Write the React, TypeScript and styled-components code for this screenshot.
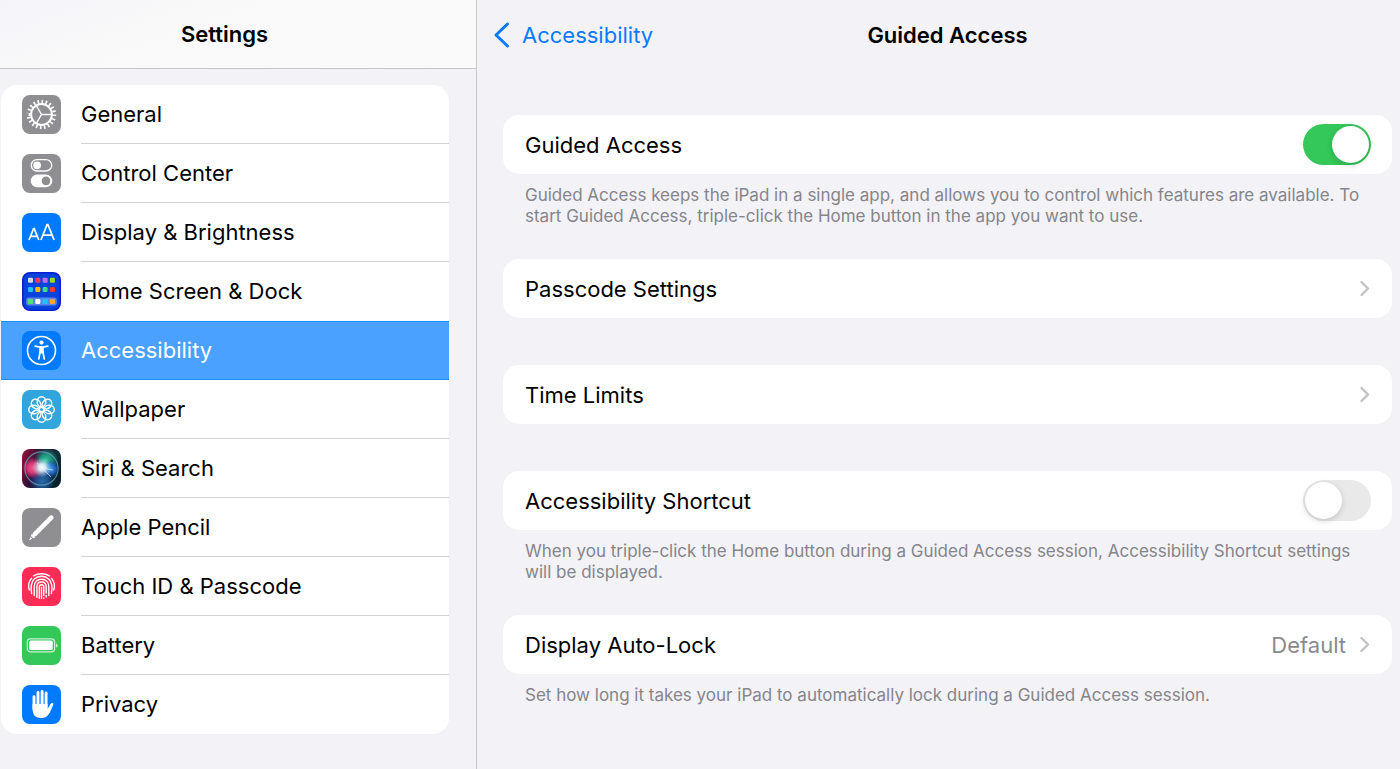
import React, { useState } from 'react';
import styled, { createGlobalStyle } from 'styled-components';

const GlobalStyle = createGlobalStyle`
  *, *::before, *::after { box-sizing: border-box; }
  body {
    margin: 0;
    background: #f2f2f7;
    color: #000;
    font-family: Inter, "Liberation Sans", sans-serif;
    font-size: 22px;
    line-height: 28px;
  }
  h1, h2, p, ul { margin: 0; padding: 0; }
  ul { list-style: none; }
`;

const Page = styled.div`
  display: grid;
  grid-template-columns: 34fr 66fr;
  min-height: 100vh;
`;

const Sidebar = styled.aside`
  min-width: 0;
`;

const SidebarHeader = styled.header`
  display: flex;
  align-items: center;
  justify-content: center;
  height: 69px;
  padding-right: 27px;
  border-bottom: 1px solid #c6c6c8;
  background: linear-gradient(160deg, #f4f4fa 0%, #f9f9f9 35%, #fafafa 100%);
`;

const Title = styled.h1`
  font-size: 22px;
  line-height: 28px;
  font-weight: 600;
`;

const Menu = styled.ul`
  margin: 16px 27px 36px 1px;
  border-radius: 16px;
  background: #fff;
  overflow: hidden;
`;

const MenuLabel = styled.span`
  flex: 1;
  display: flex;
  align-items: center;
  align-self: stretch;
  border-bottom: 1px solid #d2d2d4;
`;

const MenuLink = styled.a<{ $selected: boolean }>`
  display: flex;
  align-items: center;
  gap: 20px;
  height: 59px;
  padding-left: 21px;
  color: ${(p) => (p.$selected ? '#fff' : '#000')};
  background: ${(p) => (p.$selected ? '#4ba1ff' : 'transparent')};
  box-shadow: ${(p) => (p.$selected ? 'inset 0 1px #1b90fc, inset 0 -1px #1b90fc' : 'none')};
  text-decoration: none;

  ${MenuLabel} {
    border-color: ${(p) => (p.$selected ? 'transparent' : '#d2d2d4')};
  }
  li:last-child & ${MenuLabel},
  li:has(+ li [aria-current]) & ${MenuLabel} {
    border-color: transparent;
  }
`;

const Tile = styled.svg`
  flex: none;
  display: block;
  width: 39px;
  height: 39px;
  border-radius: 8px;
`;

const Detail = styled.main`
  min-width: 0;
  padding: 0 8px 48px 26px;
  border-left: 1px solid #c9c9cd;
`;

const DetailHeader = styled.header`
  display: grid;
  grid-template-columns: 1fr auto 1fr;
  align-items: center;
  height: 69px;
  margin-bottom: 46px;
`;

const BackLink = styled.a`
  display: flex;
  align-items: center;
  gap: 12px;
  margin-left: -9px;
  color: #0a7aff;
  text-decoration: none;
`;

const Sections = styled.div`
  display: flex;
  flex-direction: column;
`;

const Section = styled.section<{ $gap: number }>`
  margin-bottom: ${(p) => p.$gap}px;
`;

const Card = styled.div`
  border-radius: 16px;
  background: #fff;
`;

const ToggleRow = styled.label`
  display: flex;
  align-items: center;
  justify-content: space-between;
  height: 59px;
  padding: 0 21px 0 22px;
`;

const LinkRow = styled.button`
  display: flex;
  align-items: center;
  width: 100%;
  height: 59px;
  padding: 0 22px;
  border: 0;
  background: none;
  color: inherit;
  font: inherit;
  text-align: left;
`;

const RowValue = styled.span`
  margin-left: auto;
  margin-right: 14px;
  color: #8a8a8e;
`;

const RowText = styled.span`
  flex: 1;
`;

const Note = styled.p`
  padding: 11px 22px 0;
  color: #85858b;
  font-size: 17px;
  line-height: 21px;
`;

const Switch = styled.input`
  appearance: none;
  flex: none;
  display: flex;
  align-items: center;
  width: 68px;
  height: 41px;
  margin: 0;
  padding: 2px;
  border-radius: 21px;
  background: #e9e9ea;

  &::before {
    content: "";
    width: 37px;
    height: 37px;
    border-radius: 50%;
    background: #fff;
    box-shadow: 0 2px 6px rgba(0, 0, 0, 0.16);
  }
  &:checked {
    justify-content: flex-end;
    background: #34c759;
  }
`;

const GREY = '#8e8e93';
const BLUE = '#007aff';

const GearIcon = () => (
  <Tile viewBox="0 0 39 39" aria-hidden="true">
    <rect width="39" height="39" fill={GREY} />
    <g fill="none" stroke="#fff">
      <circle cx="19.5" cy="19.5" r="10.4" strokeWidth="2" />
      <circle cx="19.5" cy="19.5" r="12.9" strokeWidth="3.6" pathLength="40" strokeDasharray="0.8 1.2" />
      <path d="M19.5 19.5H30M19.5 19.5L14.2 10.4M19.5 19.5L14.2 28.6" strokeWidth="1.4" />
    </g>
  </Tile>
);

const ControlsIcon = () => (
  <Tile viewBox="0 0 39 39" aria-hidden="true">
    <rect width="39" height="39" fill={GREY} />
    <rect x="9.3" y="5.6" width="20.4" height="11.4" rx="5.7" fill="none" stroke="#fff" strokeWidth="1.3" />
    <circle cx="15.1" cy="11.3" r="3.9" fill="#fff" />
    <rect x="8.7" y="20.6" width="21.6" height="12.6" rx="6.3" fill="#fff" />
    <circle cx="24" cy="26.9" r="4.3" fill={GREY} />
  </Tile>
);

const DisplayIcon = () => (
  <Tile viewBox="0 0 39 39" aria-hidden="true">
    <rect width="39" height="39" fill={BLUE} />
    <path
      d="M7 27L11.6 15.6H12.2L16.8 27M8.6 23.4H15.2M18.9 27L25.1 11.6H25.9L32.1 27M21 22.2H30"
      fill="none"
      stroke="#fff"
      strokeWidth="1.7"
    />
  </Tile>
);

const appColours = [
  ['#d9d9dc', '#ff375f', '#bf6cf5', '#a6d82a'],
  ['#1fc0f5', '#ffb914', '#3ddc84', '#ff3b30'],
  ['#4ce37a', '#ffffff', '#1cc3f7', '#ffa630'],
];
const appRows = [5.7, 15, 27];

const HomeScreenIcon = () => (
  <Tile viewBox="0 0 39 39" aria-hidden="true">
    <rect width="39" height="39" fill="#0a1fd0" />
    <rect x="1.5" y="1.5" width="36" height="36" rx="7" fill="#0744dc" />
    <rect x="4.2" y="25.6" width="30.6" height="8" rx="2.4" fill="#5b86ea" />
    {appColours.map((row, r) =>
      row.map((fill, c) => (
        <rect key={fill} x={6 + c * 7.3} y={appRows[r]} width="5" height="5" rx="1.2" fill={fill} />
      )),
    )}
  </Tile>
);

const AccessibilityIcon = () => (
  <Tile viewBox="0 0 39 39" aria-hidden="true">
    <rect width="39" height="39" fill={BLUE} />
    <circle cx="19.5" cy="19.5" r="14" fill="none" stroke="#fff" strokeWidth="1.6" />
    <circle cx="19.5" cy="11.6" r="2.1" fill="#fff" />
    <path d="M17.2 15.2H21.8V22.4H17.2Z" fill="#fff" />
    <path
      d="M13.2 15.2L17.6 16.2H21.4L25.8 15.2M18.2 20.6L16.7 28M20.8 20.6L22.3 28"
      fill="none"
      stroke="#fff"
      strokeWidth="1.7"
      strokeLinecap="round"
      strokeLinejoin="round"
    />
  </Tile>
);

const WallpaperIcon = () => (
  <Tile viewBox="0 0 39 39" aria-hidden="true">
    <rect width="39" height="39" fill="#32a5dc" />
    <g fill="none" stroke="#fff" strokeWidth="1.5">
      {[0, 45, 90, 135, 180, 225, 270, 315].map((angle) => (
        <ellipse key={angle} cx="19.5" cy="11.8" rx="4.3" ry="5.1" transform={`rotate(${angle} 19.5 19.5)`} />
      ))}
      <circle cx="19.5" cy="19.5" r="2.3" />
    </g>
  </Tile>
);

const SiriIcon = () => (
  <Tile viewBox="0 0 39 39" aria-hidden="true">
    <defs>
      <linearGradient id="siri-base" x1="0" y1="0.2" x2="1" y2="0.6">
        <stop offset="0" stopColor="#8a1238" />
        <stop offset="0.4" stopColor="#2a1035" />
        <stop offset="0.75" stopColor="#0c3238" />
        <stop offset="1" stopColor="#07202a" />
      </linearGradient>
      <radialGradient id="siri-pink">
        <stop offset="0" stopColor="#ff5590" />
        <stop offset="0.5" stopColor="#e2407c" stopOpacity="0.85" />
        <stop offset="1" stopColor="#d02868" stopOpacity="0" />
      </radialGradient>
      <radialGradient id="siri-green">
        <stop offset="0" stopColor="#2fc79c" />
        <stop offset="0.5" stopColor="#1faa88" stopOpacity="0.8" />
        <stop offset="1" stopColor="#159a80" stopOpacity="0" />
      </radialGradient>
      <radialGradient id="siri-blue">
        <stop offset="0" stopColor="#349bf5" />
        <stop offset="0.5" stopColor="#2a70d8" stopOpacity="0.8" />
        <stop offset="1" stopColor="#1d46b8" stopOpacity="0" />
      </radialGradient>
      <radialGradient id="siri-glow">
        <stop offset="0" stopColor="#fff" />
        <stop offset="0.35" stopColor="#e4f6ff" stopOpacity="0.9" />
        <stop offset="1" stopColor="#9fd4f0" stopOpacity="0" />
      </radialGradient>
    </defs>
    <rect width="39" height="39" fill="url(#siri-base)" />
    <circle cx="20" cy="32" r="13" fill="url(#siri-blue)" opacity="0.6" />
    <circle cx="24" cy="11" r="12" fill="url(#siri-green)" />
    <circle cx="11" cy="19" r="11" fill="url(#siri-pink)" />
    <circle cx="29" cy="20" r="9" fill="url(#siri-blue)" />
    <circle cx="20" cy="18.5" r="10" fill="url(#siri-glow)" />
    <path d="M15 14L29 28M20 19L31 21" stroke="#e8faff" strokeWidth="0.9" opacity="0.7" />
    <circle cx="19.5" cy="19.5" r="16.6" fill="none" stroke="#6fa3bd" strokeWidth="1.1" opacity="0.75" />
  </Tile>
);

const PencilIcon = () => (
  <Tile viewBox="0 0 39 39" aria-hidden="true">
    <rect width="39" height="39" fill={GREY} />
    <path d="M29.3 9.6L12.8 26.2" stroke="#fff" strokeWidth="4.6" strokeLinecap="round" />
    <path d="M9.8 25.8l3.6 3.6-2.2.8-2.3-2.3z" fill="#fff" />
    <path d="M8.4 29l1.8 1.8-3.3 1.8z" fill="#fff" />
  </Tile>
);

const FingerprintIcon = () => (
  <Tile viewBox="0 0 39 39" aria-hidden="true">
    <rect width="39" height="39" fill="#ff2d55" />
    <g fill="none" stroke="#fff" strokeWidth="1.4" strokeLinecap="round">
      <path d="M11.5 8.8C16 6 23 6 27.500 8.8" />
      <path d="M7.3 23C5.800 18.500 7 14 9.600 11.200" />
      <path d="M9.6 26.500C8.600 21 8.200 16.500 12 12.300C16.500 8.200 22.500 8.200 27 12.300C31 16.500 30.400 21.500 29.400 26.500" />
      <path d="M29.4 11.200C32 14 33.200 18.500 31.700 23" />
      <path d="M12.2 28.600V19.500C12.200 15 15.300 12.200 19.500 12.200S26.800 15 26.800 19.500V28.600" />
      <path d="M14.9 30.400V20C14.900 17 16.800 15 19.500 15S24.200 17 24.200 20V26M24.200 28.500V30" />
      <path d="M17.3 31.200V20.300C17.300 16.900 21.800 16.900 21.800 20.300V28.600M21.800 31V31.200M19.500 20.500V31.500" />
    </g>
  </Tile>
);

const BatteryIcon = () => (
  <Tile viewBox="0 0 39 39" aria-hidden="true">
    <rect width="39" height="39" fill="#34c759" />
    <rect x="5.3" y="12.9" width="27.3" height="12.9" rx="3" fill="none" stroke="#c9f1d3" strokeWidth="1.2" />
    <rect x="7.2" y="14.6" width="23.5" height="9.5" rx="1.6" fill="#fff" />
    <path d="M34 17.4c2.200.7 2.200 3.500 0 4.200z" fill="#c9f1d3" />
  </Tile>
);

const HandIcon = () => (
  <Tile viewBox="0 0 39 39" aria-hidden="true">
    <rect width="39" height="39" fill={BLUE} />
    <path
      d="M12 11.8V24M16 7.5V22M20.1 6.5V22M24.1 8V22"
      stroke="#fff"
      strokeWidth="2.9"
      strokeLinecap="round"
    />
    <path
      d="M10.55 19H25.550V23.800C27 22.300 27.800 19.700 29.100 18.500C30.100 17.600 31.800 18 31.300 19.400C29.800 22.700 28.300 27.200 26.300 29.800C24.600 32 22.500 33 19.300 33C13.500 33 10.550 29.800 10.550 24Z"
      fill="#fff"
    />
  </Tile>
);

const Chevron = () => (
  <svg width="10" height="17" viewBox="0 0 10 17" aria-hidden="true">
    <path d="M1.5 2L8 8.5L1.5 15" fill="none" stroke="#c2c2c5" strokeWidth="2.4" strokeLinecap="round" strokeLinejoin="round" />
  </svg>
);

const menuItems = [
  { label: 'General', Icon: GearIcon },
  { label: 'Control Center', Icon: ControlsIcon },
  { label: 'Display & Brightness', Icon: DisplayIcon },
  { label: 'Home Screen & Dock', Icon: HomeScreenIcon },
  { label: 'Accessibility', Icon: AccessibilityIcon },
  { label: 'Wallpaper', Icon: WallpaperIcon },
  { label: 'Siri & Search', Icon: SiriIcon },
  { label: 'Apple Pencil', Icon: PencilIcon },
  { label: 'Touch ID & Passcode', Icon: FingerprintIcon },
  { label: 'Battery', Icon: BatteryIcon },
  { label: 'Privacy', Icon: HandIcon },
];

export default function App() {
  const [guided, setGuided] = useState(true);
  const [shortcut, setShortcut] = useState(false);
  const selected = 'Accessibility';

  return (
    <>
      <GlobalStyle />
      <Page>
        <Sidebar>
          <SidebarHeader>
            <Title>Settings</Title>
          </SidebarHeader>
          <nav aria-label="Settings">
            <Menu>
              {menuItems.map(({ label, Icon }) => (
                <li key={label}>
                  <MenuLink href="#" $selected={label === selected} aria-current={label === selected ? 'page' : undefined}>
                    <Icon />
                    <MenuLabel>{label}</MenuLabel>
                  </MenuLink>
                </li>
              ))}
            </Menu>
          </nav>
        </Sidebar>

        <Detail>
          <DetailHeader>
            <BackLink href="#">
              <svg width="16" height="26" viewBox="0 0 16 26" aria-hidden="true">
                <path d="M13.5 2L2 13L13.5 24" fill="none" stroke="#0a7aff" strokeWidth="3" strokeLinecap="round" strokeLinejoin="round" />
              </svg>
              Accessibility
            </BackLink>
            <Title as="h2">Guided Access</Title>
          </DetailHeader>

          <Sections>
            <Section $gap={32}>
              <Card>
                <ToggleRow>
                  Guided Access
                  <Switch type="checkbox" role="switch" checked={guided} onChange={(e) => setGuided(e.target.checked)} />
                </ToggleRow>
              </Card>
              <Note>
                Guided Access keeps the iPad in a single app, and allows you to control which features are available. To
                start Guided Access, triple-click the Home button in the app you want to use.
              </Note>
            </Section>

            <Section $gap={47}>
              <Card>
                <LinkRow type="button">
                  <RowText>Passcode Settings</RowText>
                  <Chevron />
                </LinkRow>
              </Card>
            </Section>

            <Section $gap={47}>
              <Card>
                <LinkRow type="button">
                  <RowText>Time Limits</RowText>
                  <Chevron />
                </LinkRow>
              </Card>
            </Section>

            <Section $gap={32}>
              <Card>
                <ToggleRow>
                  Accessibility Shortcut
                  <Switch type="checkbox" role="switch" checked={shortcut} onChange={(e) => setShortcut(e.target.checked)} />
                </ToggleRow>
              </Card>
              <Note>
                When you triple-click the Home button during a Guided Access session, Accessibility Shortcut settings
                will be displayed.
              </Note>
            </Section>

            <Section $gap={0}>
              <Card>
                <LinkRow type="button">
                  <RowText>Display Auto-Lock</RowText>
                  <RowValue>Default</RowValue>
                  <Chevron />
                </LinkRow>
              </Card>
              <Note>Set how long it takes your iPad to automatically lock during a Guided Access session.</Note>
            </Section>
          </Sections>
        </Detail>
      </Page>
    </>
  );
}
